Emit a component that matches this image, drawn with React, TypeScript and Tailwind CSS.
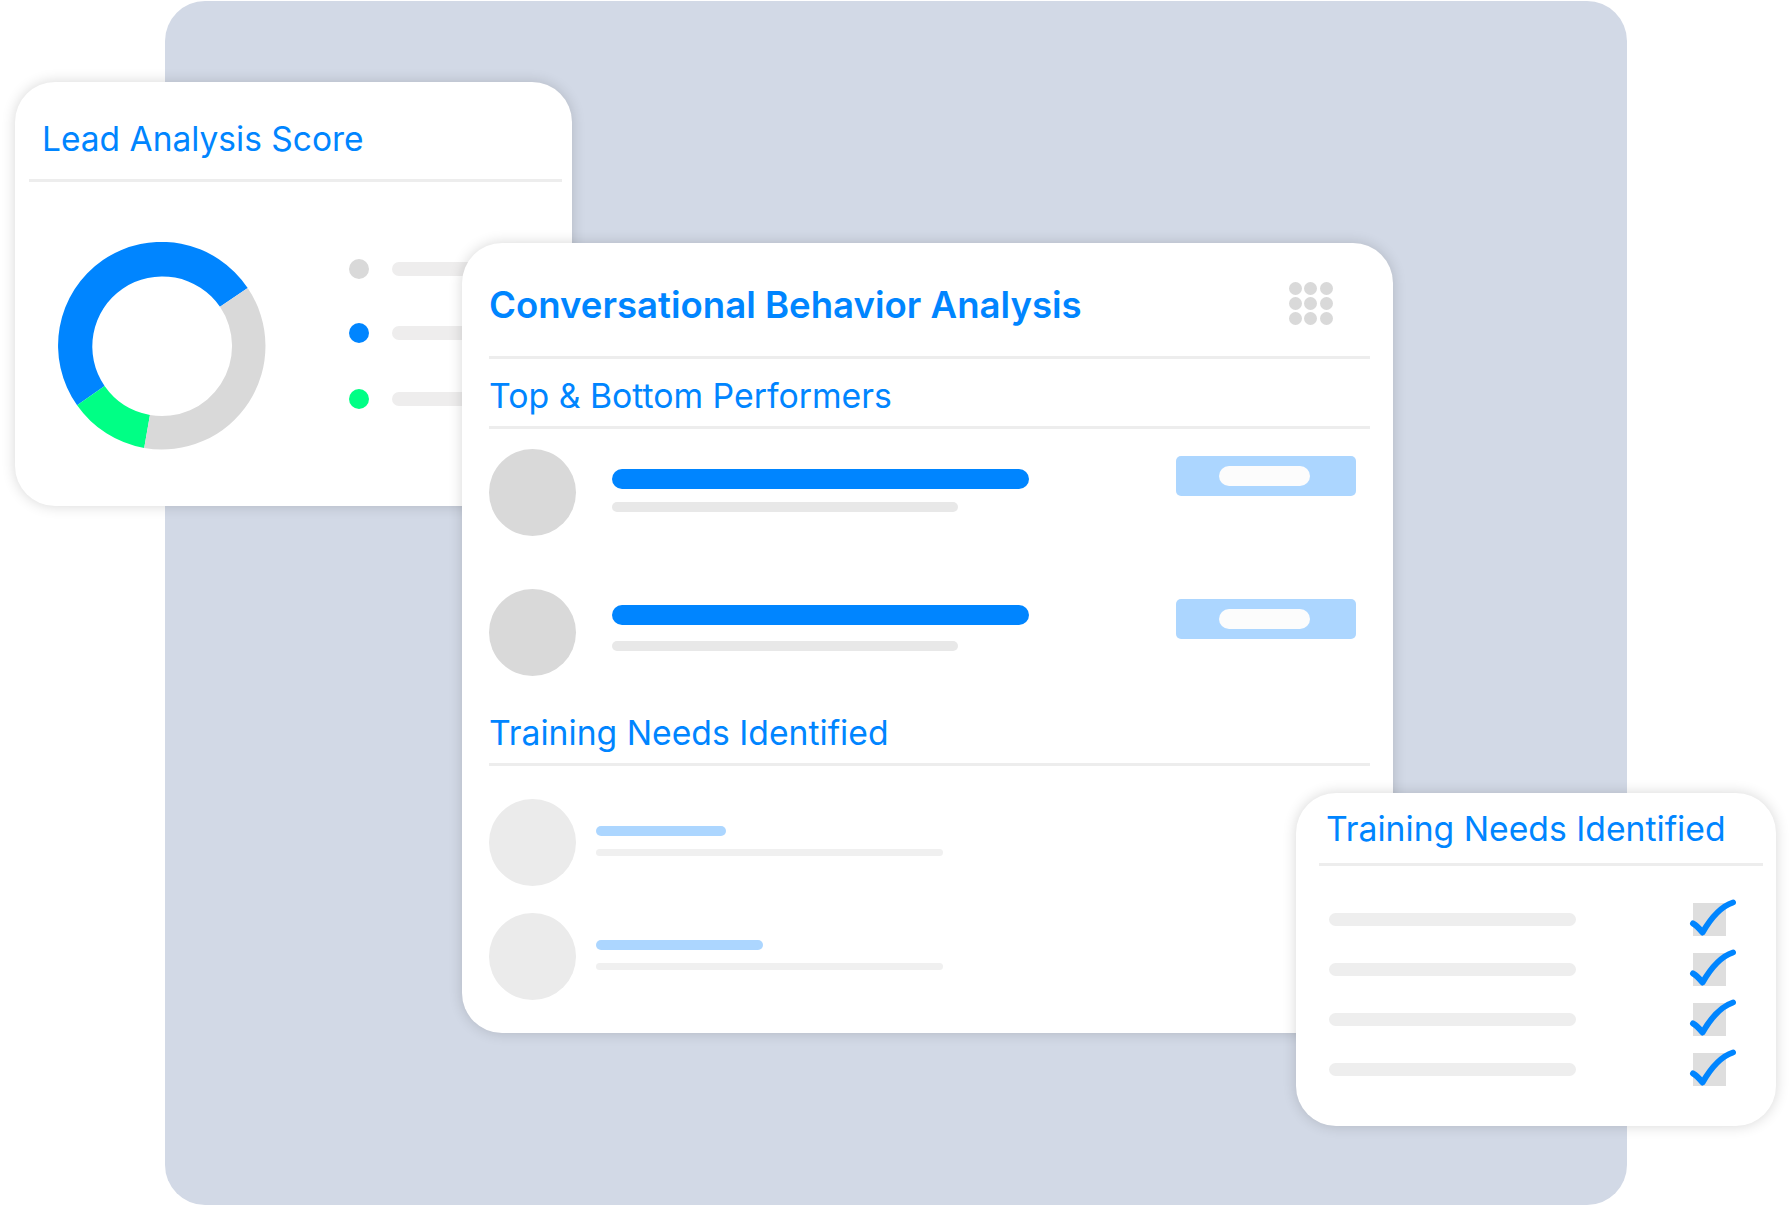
import React from 'react';

const BLUE = 'text-[#0085ff]';

const Divider: React.FC<{ className: string }> = ({ className }) => (
  <div className={`h-[3px] bg-[#ededed] ${className}`} />
);

const Donut: React.FC = () => (
  <svg viewBox="0 0 208 208" className="w-[208px] h-[208px] shrink-0">
    <path fill="#0085ff" d="M189.7 46A103.5 103.5 0 1 0 19.1 163.2L46.6 144.05A70 70 0 1 1 162 64.75Z" />
    <path fill="#00ff85" d="M19.1 163.2A103.5 103.5 0 0 0 86.2 205.96L91.96 172.96A70 70 0 0 1 46.6 144.05Z" />
    <path fill="#d9d9d9" d="M86.2 205.96A103.5 103.5 0 0 0 189.7 46L162 64.75A70 70 0 0 1 91.96 172.96Z" />
  </svg>
);

const LegendRow: React.FC<{ dot: string; className?: string }> = ({ dot, className = '' }) => (
  <div className={`flex items-center gap-[23px] ${className}`}>
    <div className={`w-5 h-5 rounded-full ${dot}`} />
    <div className="w-[120px] h-[14px] rounded-full bg-[#eeeded]" />
  </div>
);

const LeadCard: React.FC = () => (
  <div className="absolute left-[15px] top-[82px] w-[557px] h-[424px] rounded-[40px] bg-white shadow-[0_0_14px_rgba(0,0,0,0.16)]">
    <h2 className={`pl-[27px] pt-[37px] text-[33.5px] leading-[40px] font-normal ${BLUE}`}>Lead Analysis Score</h2>
    <Divider className="ml-[14px] mr-[10px] mt-[20px]" />
    <div className="flex pl-[43px] pt-[60px]">
      <Donut />
      <div className="ml-[83px] pt-[17px]">
        <LegendRow dot="bg-[#d9d9d9]" />
        <LegendRow dot="bg-[#0085ff]" className="mt-[44px]" />
        <LegendRow dot="bg-[#00ff85]" className="mt-[46px]" />
      </div>
    </div>
  </div>
);

const DotGrid: React.FC = () => (
  <div className="grid grid-cols-3 gap-[2px] w-[44px]">
    {Array.from({ length: 9 }).map((_, i) => (
      <div key={i} className="w-[13px] h-[13px] rounded-full bg-[#d9d9d9]" />
    ))}
  </div>
);

const Performer: React.FC<{ barTop: string; subGap: string; btnTop: string; className?: string }> = ({ barTop, subGap, btnTop, className = '' }) => (
  <div className={`flex h-[87px] ${className}`}>
    <div className="w-[87px] h-[87px] rounded-full bg-[#d9d9d9] shrink-0" />
    <div className={`ml-[36px] w-[417px] ${barTop}`}>
      <div className="h-5 rounded-full bg-[#0085ff]" />
      <div className={`w-[346px] h-[10px] rounded-full bg-[#e8e8e8] ${subGap}`} />
    </div>
    <div className={`ml-[147px] w-[180px] h-10 rounded-[5px] bg-[#acd6ff] flex items-center justify-center pr-[4px] ${btnTop}`}>
      <div className="w-[91px] h-5 rounded-full bg-[#fcfcfc]" />
    </div>
  </div>
);

const Trainee: React.FC<{ bar: string; className?: string }> = ({ bar, className = '' }) => (
  <div className={`flex h-[87px] ${className}`}>
    <div className="w-[87px] h-[87px] rounded-full bg-[#ebebeb] shrink-0" />
    <div className="ml-[20px] pt-[27px]">
      <div className={`h-[10px] rounded-full bg-[#acd6ff] ${bar}`} />
      <div className="w-[347px] h-[7px] mt-[13px] rounded-full bg-[#f0f0f0]" />
    </div>
  </div>
);

const BehaviorCard: React.FC = () => (
  <div className="absolute left-[462px] top-[243px] w-[931px] h-[790px] rounded-[40px] bg-white shadow-[0_0_14px_rgba(0,0,0,0.16)] pl-[27px] pr-[23px]">
    <div className="flex items-start justify-between h-[113px] pr-[37px]">
      <h1 className={`pt-[37px] text-[36.6px] leading-[50px] font-semibold ${BLUE}`}>Conversational Behavior Analysis</h1>
      <div className="pt-[39px]">
        <DotGrid />
      </div>
    </div>
    <Divider className="" />
    <h3 className={`pt-[17px] text-[33.8px] leading-[40px] font-normal ${BLUE}`}>Top &amp; Bottom Performers</h3>
    <Divider className="mt-[10px]" />
    <Performer className="mt-[20px]" barTop="pt-[20px]" subGap="mt-[13px]" btnTop="mt-[7px]" />
    <Performer className="mt-[53px]" barTop="pt-[16px]" subGap="mt-[16px]" btnTop="mt-[10px]" />
    <h3 className={`pt-[37px] text-[33.7px] leading-[40px] font-normal ${BLUE}`}>Training Needs Identified</h3>
    <Divider className="mt-[10px]" />
    <Trainee bar="w-[130px]" className="mt-[33px]" />
    <Trainee bar="w-[167px]" className="mt-[27px]" />
  </div>
);

const Check: React.FC = () => (
  <svg viewBox="0 0 50 40" className="absolute left-[-4px] top-[-4px] w-[50px] h-[40px]" fill="none">
    <path
      d="M4 24.5C7 26 10 29 13.5 33.5C19 24 30 8 44 3.5"
      stroke="#0085ff"
      strokeWidth="6"
      strokeLinecap="round"
      strokeLinejoin="round"
    />
  </svg>
);

const CheckRow: React.FC<{ className?: string }> = ({ className = '' }) => (
  <div className={`flex items-center justify-between h-[33px] ${className}`}>
    <div className="w-[247px] h-[13px] rounded-full bg-[#eeeeee]" />
    <div className="relative w-[33px] h-[33px] bg-[#dedede] mr-[1px]">
      <Check />
    </div>
  </div>
);

const ChecklistCard: React.FC = () => (
  <div className="absolute left-[1296px] top-[793px] w-[480px] h-[333px] rounded-[40px] bg-white shadow-[0_0_14px_rgba(0,0,0,0.16)]">
    <h3 className={`pl-[30px] pt-[16px] text-[33.7px] leading-[40px] font-normal ${BLUE}`}>Training Needs Identified</h3>
    <Divider className="ml-[23px] mr-[13px] mt-[14px]" />
    <div className="pl-[33px] pr-[49px] pt-[37px]">
      <CheckRow />
      <CheckRow className="mt-[17px]" />
      <CheckRow className="mt-[17px]" />
      <CheckRow className="mt-[17px]" />
    </div>
  </div>
);

const App: React.FC = () => (
  <div className="relative w-[1789px] h-[1205px] overflow-hidden bg-white font-['Inter',sans-serif]">
    <div className="absolute left-[165px] top-[1px] w-[1462px] h-[1204px] rounded-[40px] bg-[#d2d9e6]" />
    <LeadCard />
    <BehaviorCard />
    <ChecklistCard />
  </div>
);

export default App;
